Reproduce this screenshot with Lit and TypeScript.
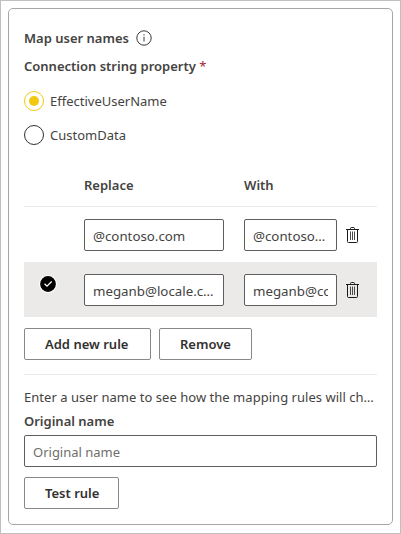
import { LitElement, html, css } from "lit";
import { customElement, property } from "lit/decorators.js";

@customElement("trash-icon")
class TrashIcon extends LitElement {
  static styles = css`
    :host { display: block; width: 13px; height: 17px; }
    svg { display: block; }
  `;
  render() {
    return html`<svg width="13" height="17" viewBox="0 0 13 17" fill="none" stroke="#1b1a19">
      <path d="M0 2.5H13" />
      <path d="M4.5 2.5V1.5Q4.5 .5 5.5 .5H7.5Q8.5 .5 8.5 1.5V2.5" />
      <path d="M1.5 2.5V14.5Q1.5 15.5 2.5 15.5H10.5Q11.5 15.5 11.5 14.5V2.5" />
      <path d="M4.5 4.5V13M6.5 4.5V13M8.5 4.5V13" stroke="#4c4a48" />
    </svg>`;
  }
}

@customElement("rule-row")
class RuleRow extends LitElement {
  @property() from = "";
  @property() to = "";
  @property({ type: Boolean, reflect: true }) selected = false;

  static styles = css`
    :host {
      display: grid;
      grid-template-columns: 60px 140px 113px 13px;
      height: 55px;
      box-sizing: border-box;
      padding-top: 12px;
      align-items: start;
      font-size: 13.3px;
    }
    :host([selected]) { background: #ebeae8; }
    .mark { padding: 1px 0 0 15px; height: 18px; }
    .mark svg { display: block; }
    .field {
      box-sizing: border-box;
      height: 32px;
      border: 1px solid #605e5c;
      border-radius: 2px;
      background: #fff;
      padding: 0 8px;
      line-height: 32px;
    }
    .text { overflow: hidden; white-space: nowrap; }
    .to { margin-left: 20px; width: 93px; }
    trash-icon { margin: 8px 0 0 9px; }
  `;
  render() {
    return html`
      <div class="mark">
        ${this.selected
          ? html`<svg width="18" height="18" viewBox="0 0 18 18">
              <circle cx="9" cy="9" r="9" fill="#fff" />
              <circle cx="9" cy="9" r="7.9" fill="#000" />
              <path d="M5.5 8.8L8 11.2L12.7 6.5" fill="none" stroke="#fff" stroke-width="1.3" />
            </svg>`
          : ""}
      </div>
      <div class="field"><div class="text">${this.from}</div></div>
      <div class="field to"><div class="text">${this.to}</div></div>
      <trash-icon></trash-icon>
    `;
  }
}

@customElement("app-root")
class AppRoot extends LitElement {
  static styles = css`
    :host {
      display: block;
      box-sizing: border-box;
      width: 401px;
      height: 534px;
      border: 1px solid #c0c0c0;
      padding: 7px;
      background: #fff;
      color: #444342;
      font: 13px/20px "Noto Sans", "Open Sans", sans-serif;
      white-space: nowrap;
    }
    .card {
      box-sizing: border-box;
      width: 385px;
      height: 517px;
      border: 1px solid #a6a6a6;
      border-radius: 5px;
      padding: 19px 15px 0;
    }
    .semi { font-weight: 600; font-size: 13px; }
    .title { display: flex; align-items: center; height: 20px; }
    .title svg { margin-left: 7px; }
    .prop { margin-top: 8px; height: 20px; }
    .req { color: #a4262c; font-weight: 400; }
    .radio { display: flex; align-items: center; height: 20px; gap: 6px; }
    .radio svg { display: block; }
    .first { margin-top: 15px; }
    .second { margin-top: 14px; }
    .head {
      display: grid;
      grid-template-columns: 60px 160px 1fr;
      height: 62px;
      box-sizing: border-box;
      padding-top: 30px;
      border-bottom: 1px solid #eaeaea;
    }
    .rows { margin-bottom: 11px; }
    .buttons { display: flex; gap: 8px; }
    .btn {
      box-sizing: border-box;
      height: 32px;
      border: 1px solid #8a8886;
      border-radius: 2px;
      padding-left: 20px;
      line-height: 30px;
      color: #323130;
    }
    .add { width: 127px; }
    .remove { width: 93px; }
    .test { width: 95px; margin-top: 10px; }
    .rule { height: 1px; background: #edebe9; margin: 14px 0 12px; }
    .hint { height: 20px; letter-spacing: 0.03px; }
    .label { margin-top: 4px; height: 21px; }
    .input {
      box-sizing: border-box;
      height: 32px;
      border: 1px solid #605e5c;
      border-radius: 2px;
      margin-top: 3px;
      padding-left: 8px;
      line-height: 32px;
      color: #706e6c;
    }
  `;
  render() {
    return html`
      <div class="card">
        <div class="title semi">
          <span>Map user names</span>
          <svg width="16" height="16" viewBox="0 0 16 16">
            <circle cx="8" cy="8" r="7.2" fill="none" stroke="#3b3a39" />
            <path d="M8 4.3V5.5M8 6.8V11.5" stroke="#3b3a39" fill="none" />
          </svg>
        </div>
        <div class="prop semi"><span>Connection string property</span> <span class="req">*</span></div>
        <div class="radio first">
          <svg width="20" height="20" viewBox="0 0 20 20">
            <circle cx="10" cy="10" r="9.5" fill="none" stroke="#f2c811" />
            <circle cx="10" cy="10" r="5" fill="#f2c811" />
          </svg>
          <span>EffectiveUserName</span>
        </div>
        <div class="radio second">
          <svg width="20" height="20" viewBox="0 0 20 20">
            <circle cx="10" cy="10" r="9.5" fill="none" stroke="#323130" />
          </svg>
          <span>CustomData</span>
        </div>
        <div class="head semi"><span></span><span>Replace</span><span>With</span></div>
        <div class="rows">
          <rule-row from="@contoso.com" to="@contoso…"></rule-row>
          <rule-row selected from="meganb@locale.c…" to="meganb@contoso.com"></rule-row>
        </div>
        <div class="buttons">
          <div class="btn semi add">Add new rule</div>
          <div class="btn semi remove">Remove</div>
        </div>
        <div class="rule"></div>
        <div class="hint">Enter a user name to see how the mapping rules will ch…</div>
        <div class="label semi">Original name</div>
        <div class="input">Original name</div>
        <div class="btn semi test">Test rule</div>
      </div>
    `;
  }
}
